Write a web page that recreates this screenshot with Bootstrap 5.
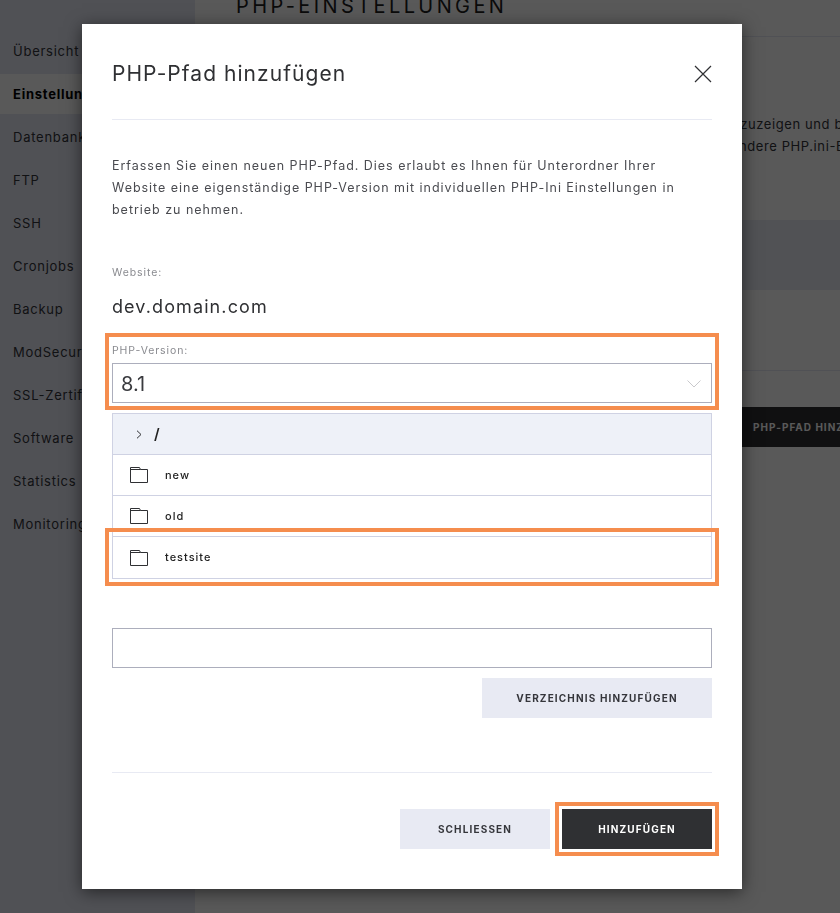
<!doctype html>
<html lang="de">
<head>
<meta charset="utf-8">
<title>PHP-Pfad hinzufügen</title>
<link rel="stylesheet" href="https://cdn.jsdelivr.net/npm/bootstrap@5.3.0/dist/css/bootstrap.min.css">
<style>
:root{--app-font:Inter,"Liberation Sans",sans-serif}
html,body{height:913px;overflow:hidden}
body{font-family:var(--app-font);color:#3a3b3f;background:#fff;font-size:13px}
.app-shell{height:913px;overflow:hidden}
.side-nav{width:195px;background:#e6e8f3;padding-top:31px;flex:none}
.side-link{display:block;height:40px;line-height:40px;margin-bottom:3px;padding-left:13px;font-size:13px;letter-spacing:.75px;color:#33343a;text-decoration:none;white-space:nowrap}
.side-link.on{background:#fff;font-weight:700;color:#000}
.main-pane{flex:1;min-width:0;position:relative}
.page-head{height:37px;border-bottom:1px solid #e6e8f3;padding-left:41px;display:flex;align-items:flex-end}
.page-head h1{font-size:20px;font-weight:400;letter-spacing:3.4px;margin:0 0 18px;line-height:24px;white-space:nowrap;color:#222}
.intro-line{font-size:13px;letter-spacing:.6px;line-height:22px;white-space:nowrap;color:#33343a;padding-left:529px}
.intro-block{padding-top:76px;height:183px}
.intro-line.second{padding-left:536px}
.band{height:70px;background:#e8eaf3}
.rule{height:81px;border-bottom:1px solid #e6e8f3}
.dark-btn{background:#2f3033;color:#fff;font-weight:700;font-size:10px;letter-spacing:1px;height:40px;line-height:40px;margin:36px 0 0 500px;padding-left:58px;white-space:nowrap}
.shade{background:rgba(0,0,0,.65);z-index:1050}
.sheet{position:absolute;left:82px;top:24px;width:660px;height:865px;background:#fff;padding:0 30px;box-shadow:0 3px 16px rgba(0,0,0,.55);z-index:1060}
.sheet-head{height:96px;border-bottom:1px solid #e8eaf3;display:flex;align-items:center;justify-content:space-between;padding-top:5px}
.sheet-head h2{font-size:21px;font-weight:400;letter-spacing:1.05px;margin:0;color:#2f3033}
.close-x{background:none;border:0;padding:0;width:18px;height:18px;display:block}
.close-x svg{display:block}
.lede{font-size:12.5px;letter-spacing:.97px;line-height:22px;margin:35px 0 0;color:#4a4b50}
.field-label{font-size:10.5px;letter-spacing:.9px;color:#8a8b90;line-height:14px;margin:0;display:block}
.label-site{margin-top:45px}
.label-php{margin-top:25px;margin-bottom:5px}
.site-name{font-size:18px;letter-spacing:1.1px;color:#2f3033;line-height:24px;margin-top:15px}
.fake-select{height:40px;border:1px solid #acaebc;padding-left:8px;padding-top:1px;font-size:20px;line-height:38px;color:#3a3b3f;display:flex;align-items:center;justify-content:space-between;padding-right:10px}
.tree{border:1px solid #cfd2e3;margin-top:10px}
.tree-row{height:41px;border-bottom:1px solid #cfd2e3;display:flex;align-items:center;padding-left:17px;gap:17px;font-size:11px;font-weight:500;letter-spacing:1px;color:#222;margin:0;list-style:none}
.tree-row:last-child{border-bottom:0}
.tree-root{background:#eef1f8;padding-left:23px;gap:12px;font-size:15px;font-weight:600}
.path-box{height:40px;border:1px solid #acaebc;border-radius:0;margin-top:49px;display:block;width:100%;background:#fff}
.add-row{margin-top:10px}
.soft-btn,.solid-btn{border-radius:0;border:0;height:40px;font-size:10px;font-weight:700;letter-spacing:1.15px;text-transform:uppercase;padding:0;width:150px}
.soft-btn{background:#e8eaf3;color:#35363b}
.solid-btn{background:#2f3033;color:#fff}
.soft-btn.wide{width:230px}
.foot-rule{border-top:1px solid #e8eaf3;margin-top:54px;padding-top:36px;gap:12px}
.mark-box{position:absolute;border:4px solid #f58d4e;pointer-events:none}
.mark-a{left:23px;top:309px;width:614px;height:77px}
.mark-b{left:23px;top:504px;width:614px;height:58px}
.mark-c{left:473px;top:778px;width:164px;height:54px}
</style>
</head>
<body>
<div class="app-shell d-flex">
  <nav class="side-nav">
    <a class="side-link" href="#">Übersicht</a>
    <a class="side-link on" href="#">Einstellungen</a>
    <a class="side-link" href="#">Datenbanken</a>
    <a class="side-link" href="#">FTP</a>
    <a class="side-link" href="#">SSH</a>
    <a class="side-link" href="#">Cronjobs</a>
    <a class="side-link" href="#">Backup</a>
    <a class="side-link" href="#">ModSecurity</a>
    <a class="side-link" href="#">SSL-Zertifikate</a>
    <a class="side-link" href="#">Software</a>
    <a class="side-link" href="#">Statistics</a>
    <a class="side-link" href="#">Monitoring</a>
  </nav>
  <main class="main-pane overflow-hidden">
    <div class="page-head"><h1>PHP-EINSTELLUNGEN</h1></div>
    <div class="intro-block">
      <div class="intro-line">anzuzeigen und bearbeiten</div>
      <div class="intro-line second">andere PHP.ini-Einstellungen</div>
    </div>
    <div class="band"></div>
    <div class="rule"></div>
    <div class="dark-btn">PHP-PFAD HINZUFÜGEN</div>
  </main>
</div>
<div class="shade position-fixed top-0 start-0 w-100 h-100"></div>
<div class="sheet" role="dialog">
  <div class="sheet-head">
    <h2>PHP-Pfad hinzufügen</h2>
    <button class="close-x" type="button" aria-label="Schliessen">
      <svg width="18" height="18" viewBox="0 0 18 18" fill="none" stroke="#2f3033" stroke-width="1.2"><path d="M1 1 17 17M17 1 1 17"/></svg>
    </button>
  </div>
  <p class="lede">Erfassen Sie einen neuen PHP-Pfad. Dies erlaubt es Ihnen für Unterordner Ihrer<br>Website eine eigenständige PHP-Version mit individuellen PHP-Ini Einstellungen in<br>betrieb zu nehmen.</p>
  <label class="field-label label-site">Website:</label>
  <div class="site-name">dev.domain.com</div>
  <label class="field-label label-php">PHP-Version:</label>
  <div class="fake-select">8.1
    <svg width="14" height="8" viewBox="0 0 14 8" fill="none" stroke="#c9c9cc" stroke-width="1"><path d="M.5.5 7 7 13.5.5"/></svg>
  </div>
  <ul class="tree p-0 mb-0">
    <li class="tree-row tree-root"><svg width="6" height="9" viewBox="0 0 6 9" fill="none" stroke="#2f3033" stroke-width="1"><path d="M1 .7 5 4.5 1 8.3"/></svg><span>/</span></li>
    <li class="tree-row"><svg width="18" height="16" viewBox="0 0 18 16" fill="none" stroke="#2f3033"><path d="M.5 15.5V.5h9l1 2h7v13zM.5 2.5h10"/></svg>new</li>
    <li class="tree-row"><svg width="18" height="16" viewBox="0 0 18 16" fill="none" stroke="#2f3033"><path d="M.5 15.5V.5h9l1 2h7v13zM.5 2.5h10"/></svg>old</li>
    <li class="tree-row"><svg width="18" height="16" viewBox="0 0 18 16" fill="none" stroke="#2f3033"><path d="M.5 15.5V.5h9l1 2h7v13zM.5 2.5h10"/></svg>testsite</li>
  </ul>
  <input class="path-box" type="text" aria-label="Verzeichnis">
  <div class="add-row d-flex justify-content-end">
    <button class="soft-btn wide" type="button">Verzeichnis hinzufügen</button>
  </div>
  <div class="foot-rule d-flex justify-content-end">
    <button class="soft-btn" type="button">Schliessen</button>
    <button class="solid-btn" type="button">Hinzufügen</button>
  </div>
  <div class="mark-box mark-a"></div>
  <div class="mark-box mark-b"></div>
  <div class="mark-box mark-c"></div>
</div>
</body>
</html>
